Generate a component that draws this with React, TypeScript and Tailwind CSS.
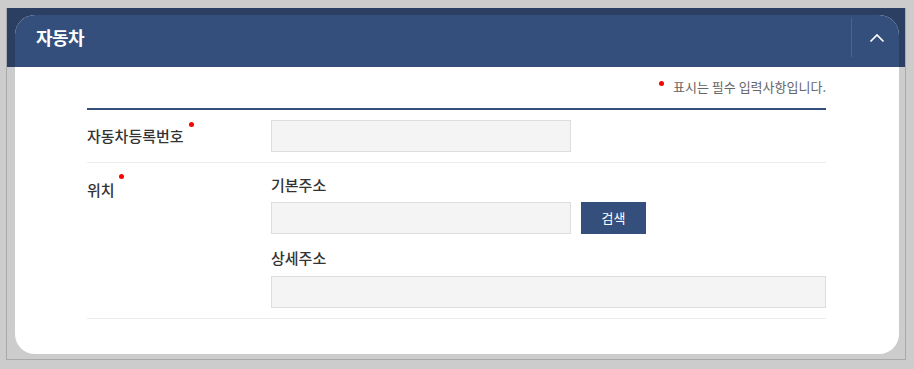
import React from "react";

const font = { fontFamily: '"Noto Sans CJK KR", "Noto Sans", sans-serif' };

function Dot({ className = "" }: { className?: string }) {
  return (
    <span
      className={`relative inline-block w-[5px] h-[5px] rounded-full bg-[#ff0000] align-top ${className}`}
    />
  );
}

export default function App() {
  return (
    <div className="w-[914px] h-[369px] bg-[#cccccc] pt-[8px] pl-[6px]" style={font}>
      <div className="w-[900px] h-[352px] border-x border-b border-[#a9a9a9] bg-[linear-gradient(to_bottom,#2b3f62_0,#2b3f62_59px,#cccccc_59px)] pt-[7px] pl-[8px]">
        <div className="w-[884px] h-[339px] rounded-[20px] overflow-hidden bg-white flex flex-col">
          {/* header */}
          <div className="h-[52px] bg-[#344f7c] flex items-start justify-between shrink-0">
            <div className="pl-[21px] pt-[9px] leading-[26px] text-[18px] font-bold text-white tracking-[-0.5px]">
              자동차
            </div>
            <div className="mt-[3px] w-[48px] h-[39px] border-l border-[#4b6392] flex items-center justify-center">
              <svg width="16" height="10" viewBox="0 0 16 10" className="ml-[3px]">
                <polyline
                  points="1.5,8.5 8,2 14.5,8.5"
                  fill="none"
                  stroke="#ffffff"
                  strokeWidth="1.7"
                />
              </svg>
            </div>
          </div>
          {/* body */}
          <div className="pl-[72px] pr-[73px]">
            <div className="mt-[10px] h-[20px] flex justify-end items-center text-[13px] leading-[20px] text-[#666666]">
              <Dot className="top-[-4px] mr-[9px]" />
              <span>표시는 필수 입력사항입니다.</span>
            </div>
            <div className="mt-[11px] border-t-2 border-[#344f7c]">
              {/* row 1 */}
              <div className="flex items-center py-[10px] border-b border-[#ececec]">
                <div className="w-[184px] text-[15px] leading-[20px] font-medium text-[#333333]">
                  자동차등록번호
                  <Dot className="ml-[5px] top-[-4px]" />
                </div>
                <div className="w-[300px] h-[32px] bg-[#f4f4f4] border border-[#dddddd]" />
              </div>
              {/* row 2 */}
              <div className="flex items-start border-b border-[#ececec] pb-[10px]">
                <div className="w-[184px] pt-[17px] text-[15px] leading-[20px] font-medium text-[#333333]">
                  위치
                  <Dot className="ml-[4px] top-[-6px]" />
                </div>
                <div className="flex-1 pt-[10px]">
                  <div className="text-[15px] leading-[24px] font-medium text-[#333333]">기본주소</div>
                  <div className="mt-[5px] flex">
                    <div className="w-[300px] h-[32px] bg-[#f4f4f4] border border-[#dddddd]" />
                    <button className="ml-[10px] w-[65px] h-[32px] bg-[#344f7c] text-white text-[13px] leading-[32px]">
                      검색
                    </button>
                  </div>
                  <div className="mt-[12px] text-[15px] leading-[24px] font-medium text-[#333333]">상세주소</div>
                  <div className="mt-[6px] w-full h-[32px] bg-[#f4f4f4] border border-[#dddddd]" />
                </div>
              </div>
            </div>
          </div>
        </div>
      </div>
    </div>
  );
}
